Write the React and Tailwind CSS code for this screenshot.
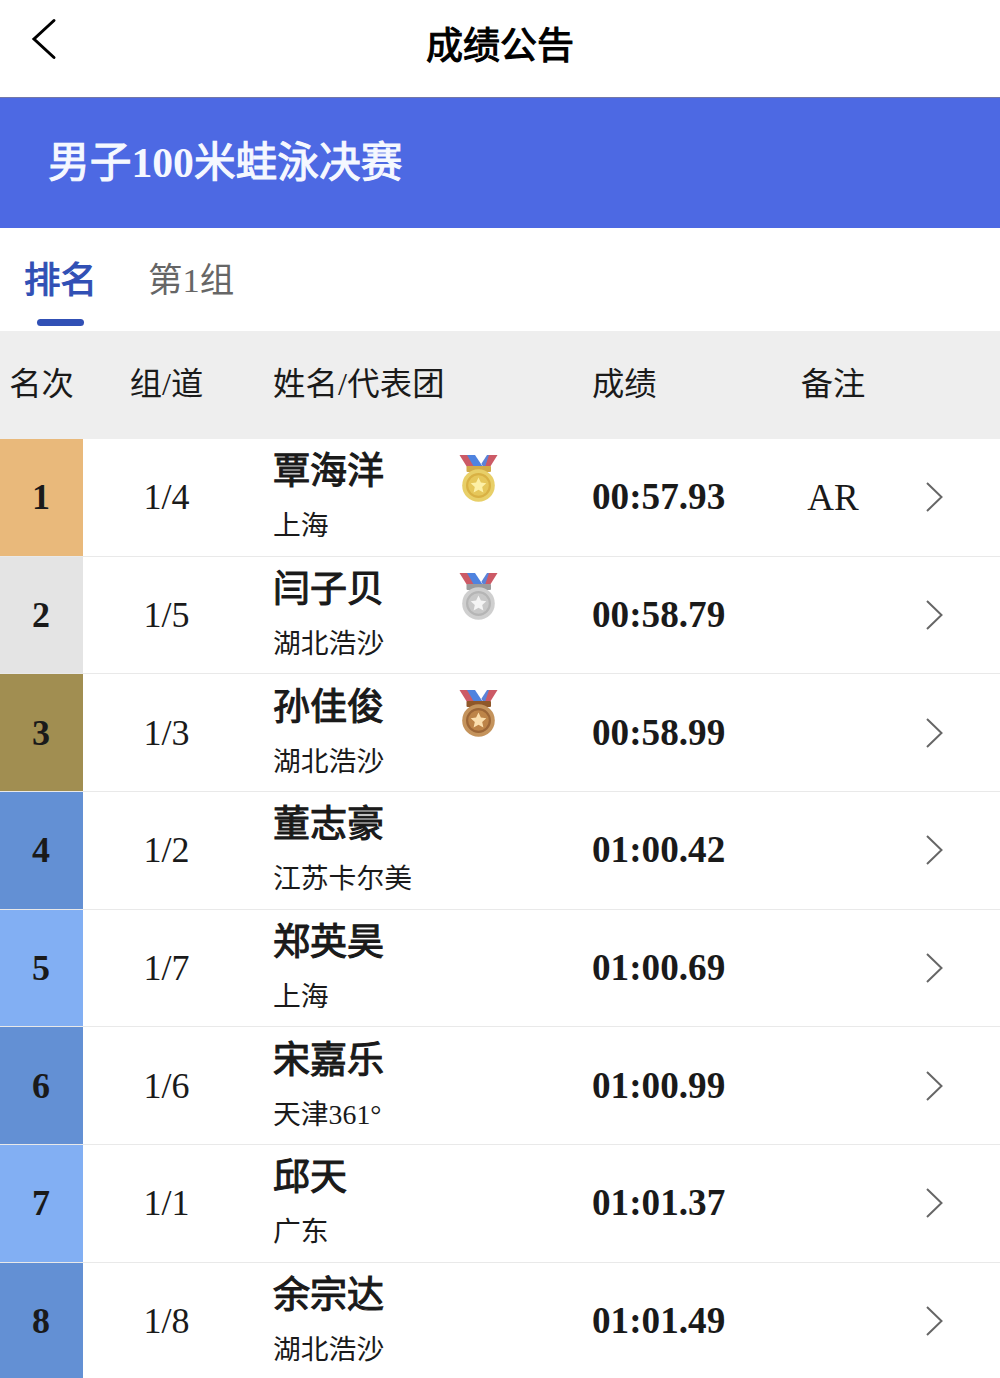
const medals = {
  gold: { rim: "#e8cf68", ring: "#d9b144", face: "#e6c75a", star: "#fdf0a6", bar: "#d2ab48" },
  silver: { rim: "#cfcfcf", ring: "#b5b5b5", face: "#c8c8c8", star: "#f4f4f4", bar: "#9c9c9c" },
  bronze: { rim: "#c4935c", ring: "#9c6637", face: "#bd8448", star: "#fbdfae", bar: "#8f5729" },
};

const results = [
  { rank: 1, lane: "1/4", name: "覃海洋", team: "上海", time: "00:57.93", note: "AR", medal: "gold", color: "bg-[#e9b97b]" },
  { rank: 2, lane: "1/5", name: "闫子贝", team: "湖北浩沙", time: "00:58.79", medal: "silver", color: "bg-[#e4e4e4]" },
  { rank: 3, lane: "1/3", name: "孙佳俊", team: "湖北浩沙", time: "00:58.99", medal: "bronze", color: "bg-[#a18e51]" },
  { rank: 4, lane: "1/2", name: "董志豪", team: "江苏卡尔美", time: "01:00.42", color: "bg-[#6390d4]" },
  { rank: 5, lane: "1/7", name: "郑英昊", team: "上海", time: "01:00.69", color: "bg-[#82aff3]" },
  { rank: 6, lane: "1/6", name: "宋嘉乐", team: "天津361°", time: "01:00.99", color: "bg-[#6390d4]" },
  { rank: 7, lane: "1/1", name: "邱天", team: "广东", time: "01:01.37", color: "bg-[#82aff3]" },
  { rank: 8, lane: "1/8", name: "余宗达", team: "湖北浩沙", time: "01:01.49", color: "bg-[#6390d4]" },
];

const Medal = ({ type }) => {
  const c = medals[type];
  return (
    <svg width="40" height="48" viewBox="0 0 40 48">
      {/* ribbon */}
      <path d="M0.5 0H9L17 12H8Z" fill="#cc5a66" />
      <path d="M8 0H16L24 12H15Z" fill="#4f83df" />
      <path d="M28 0H34L29 12H24L22.5 8.5Z" fill="#5b82d8" />
      <path d="M30 0H38.5L31 12H26Z" fill="#cc5a66" />
      <rect x="7.5" y="11" width="24.5" height="6" rx="1" fill={c.bar} />
      {/* disc */}
      <circle cx="19.5" cy="30.5" r="16.3" fill={c.rim} />
      <circle cx="19.5" cy="30.5" r="11.4" fill={c.face} stroke={c.ring} strokeWidth="2.2" />
      <path
        d="M19.5 22.5L21.9 27.6L27.3 28.2L23.2 31.9L24.4 37.5L19.5 34.7L14.6 37.5L15.8 31.9L11.7 28.2L17.1 27.6Z"
        fill={c.star}
      />
    </svg>
  );
};

const ResultRow = ({ item }) => (
  <div className="grid h-[117.66px] grid-cols-[83px_167px_342px_191px_100px_1fr] border-b border-[#e9e9e9]">
    <div className={`flex items-center justify-center pr-px text-[36px] font-bold ${item.color}`}>
      {item.rank}
    </div>
    <div className="flex items-center justify-center text-[36px]">{item.lane}</div>
    <div className="flex pl-[23px]">
      <div className="w-[186px]">
        <div className="mt-[6.4px] h-[54px] text-[37px] leading-[54px] [-webkit-text-stroke:1.1px]">{item.name}</div>
        <div className="h-[54px] text-[27.8px] leading-[54px]">{item.team}</div>
      </div>
      <div className="pt-4">{item.medal && <Medal type={item.medal} />}</div>
    </div>
    <div className="flex items-center text-[37.2px] font-bold">{item.time}</div>
    <div className="flex items-center justify-center text-[37px]">{item.note}</div>
    <div className="flex items-center pl-[42px]">
      <svg width="20" height="32" viewBox="0 0 20 32" fill="none" stroke="#666" strokeWidth="2">
        <path d="M2 2L16.5 16L2 30" />
      </svg>
    </div>
  </div>
);

const App = () => {
  return (
    <div className="h-[1378px] w-[1000px] overflow-hidden bg-white font-['Liberation_Serif','Noto_Sans_CJK_SC',sans-serif] text-[#1a1a1a]">
      <header className="grid h-[97px] grid-cols-[100px_1fr_100px]">
        <button className="flex items-start pt-[17px] pl-[30px]">
          <svg width="28" height="44" viewBox="0 0 28 44" fill="none" stroke="#000" strokeWidth="3" strokeLinecap="round">
            <path d="M24 3.5L4 22L24 40.5" />
          </svg>
        </button>
        <h1 className="pt-[20px] text-center text-[37px] leading-[54px] text-black [-webkit-text-stroke:1.1px]">成绩公告</h1>
      </header>

      <div className="h-[131px] border-t border-[#7378a8] bg-[#4d69e3] pl-12">
        <h2 className="pt-[35px] text-[41.7px] leading-[60px] text-[#f5f8ff] [-webkit-text-stroke:1.1px]">
          男子<span className="font-bold [-webkit-text-stroke:0px]">100</span>米蛙泳决赛
        </h2>
      </div>

      <nav className="flex h-[103px] pl-6">
        <div className="flex w-[73px] flex-col items-center pt-[26px]">
          <span className="text-[36.5px] leading-[54px] text-[#3150b5] [-webkit-text-stroke:1.1px]">排名</span>
          <span className="mt-[11px] h-[7px] w-[47px] rounded-full bg-[#3150b5]" />
        </div>
        <div className="ml-[51px] pt-[25px] text-[34.5px] leading-[54px] text-[#666]">第1组</div>
      </nav>

      <div className="grid h-[108px] grid-cols-[83px_167px_342px_191px_100px_1fr] bg-[#eee] text-[32.3px] leading-[106px]">
        <div className="text-center">名次</div>
        <div className="text-center">组/道</div>
        <div className="pl-[23px] tracking-[0.2px]">姓名/代表团</div>
        <div>成绩</div>
        <div className="text-center">备注</div>
      </div>

      {results.map((item) => (
        <ResultRow key={item.rank} item={item} />
      ))}
    </div>
  );
};

export default App;
